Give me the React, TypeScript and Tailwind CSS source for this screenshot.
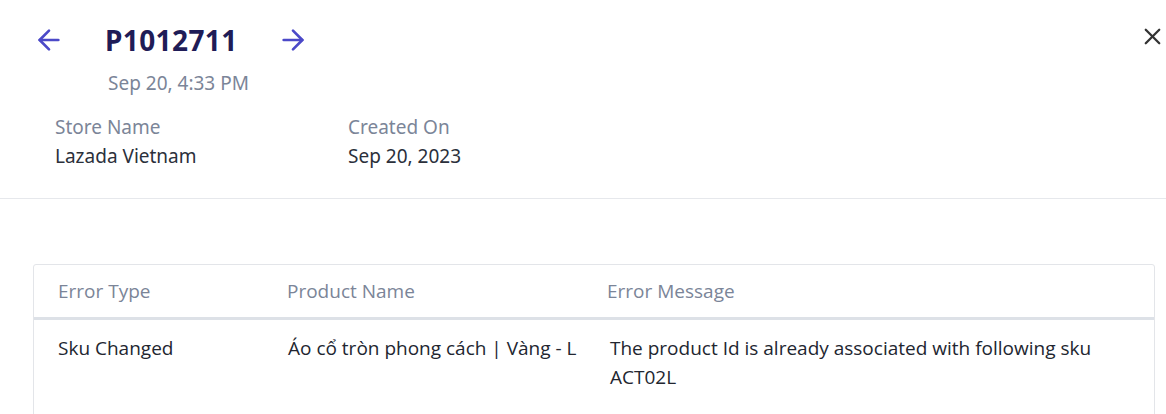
import { ArrowLeft, ArrowRight, X } from 'lucide-react';

export default function App() {
    return (
        <div className="w-[1166px] h-[414px] bg-white overflow-hidden font-['Noto_Sans',sans-serif]">
            {/* Header */}
            <div className="relative border-b border-[#e6e8ec] h-[199px] pt-[19px]">
                <div className="flex items-center">
                    <button className="ml-[33px] text-[#4b49c8]">
                        <ArrowLeft className="w-[32px] h-[32px]" strokeWidth={2} />
                    </button>
                    <h1 className="ml-[40px] text-[28px] font-bold text-[#1f1c57] tracking-[0.4px]">P1012711</h1>
                    <button className="ml-[39px] text-[#4b49c8]">
                        <ArrowRight className="w-[32px] h-[32px]" strokeWidth={2} />
                    </button>
                </div>
                <div className="ml-[108px] mt-[7px] text-[19px] leading-[30px] text-[#7b8598]">Sep 20, 4:33 PM</div>

                <div className="flex mt-[15px] ml-[55px] text-[19px]">
                    <div className="w-[293px]">
                        <div className="text-[#7b8598] leading-[29px]">Store Name</div>
                        <div className="text-[#2b303b] leading-[29px]">Lazada Vietnam</div>
                    </div>
                    <div>
                        <div className="text-[#7b8598] leading-[29px]">Created On</div>
                        <div className="text-[#2b303b] leading-[29px]">Sep 20, 2023</div>
                    </div>
                </div>

                <button className="absolute right-[0px] top-[23px] text-[#333]">
                    <X className="w-[27px] h-[27px]" strokeWidth={2} />
                </button>
            </div>

            {/* Table */}
            <div className="mt-[65px] ml-[33px] w-[1122px] border border-[#e3e5e9] rounded-[3px] font-['Open_Sans',sans-serif] text-[19px]">
                <div className="flex h-[55px] items-center border-b-[3px] border-[#dde1e7] text-[#7b8598]">
                    <div className="w-[253px] pl-[24px]">Error Type</div>
                    <div className="w-[320px]">Product Name</div>
                    <div className="flex-1">Error Message</div>
                </div>
                <div className="flex pt-[14px] pb-[30px] leading-[29px] text-[#222630]">
                    <div className="w-[253px] pl-[24px]">Sku Changed</div>
                    <div className="w-[323px] pl-[1px]">Áo cổ tròn phong cách | Vàng - L</div>
                    <div className="flex-1 pr-[40px]">
                        The product Id is already associated with following sku
                        <br />
                        ACT02L
                    </div>
                </div>
            </div>
        </div>
    );
}
